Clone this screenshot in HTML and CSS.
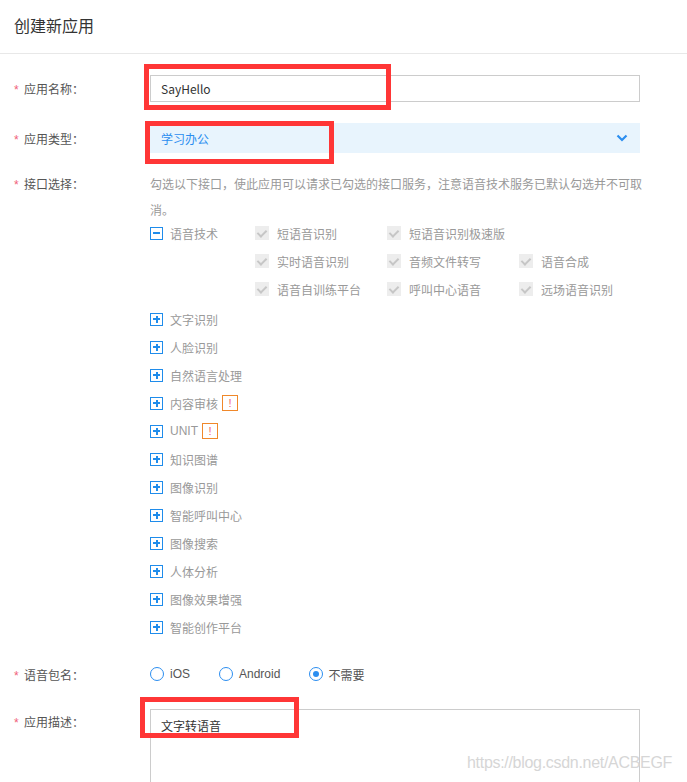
FILE: index.html
```html
<!DOCTYPE html>
<html lang="zh-CN">
<head>
<meta charset="utf-8">
<title>创建新应用</title>
<link rel="stylesheet" href="styles.css">
</head>
<body>
<div class="page">
  <header class="hd">创建新应用</header>
  <div class="form">
    <div class="row row-name">
      <div class="lbl"><span class="req">*</span>应用名称：</div>
      <div class="ctl"><div class="input">SayHello</div></div>
    </div>
    <div class="row row-type">
      <div class="lbl"><span class="req">*</span>应用类型：</div>
      <div class="ctl">
        <div class="select">
          <span>学习办公</span>
          <svg class="chev" width="12" height="8" viewBox="0 0 12 8"><path d="M1.5 1.5 L6 6 L10.5 1.5" fill="none" stroke="#2b8ef0" stroke-width="2.2"/></svg>
        </div>
      </div>
    </div>
    <div class="row row-api">
      <div class="lbl lbl-top"><span class="req">*</span>接口选择：</div>
      <div class="ctl">
        <div class="desc">勾选以下接口，使此应用可以请求已勾选的接口服务，注意语音技术服务已默认勾选并不可取消。</div>
        <div class="tree">
          <div class="group">
            <div class="node"><span class="tg minus"></span><span>语音技术</span></div>
            <div class="checks">
              <div class="ck"><span class="box"></span>短语音识别</div>
              <div class="ck"><span class="box"></span>短语音识别极速版</div>
              <div class="ck empty"></div>
              <div class="ck"><span class="box"></span>实时语音识别</div>
              <div class="ck"><span class="box"></span>音频文件转写</div>
              <div class="ck"><span class="box"></span>语音合成</div>
              <div class="ck"><span class="box"></span>语音自训练平台</div>
              <div class="ck"><span class="box"></span>呼叫中心语音</div>
              <div class="ck"><span class="box"></span>远场语音识别</div>
            </div>
          </div>
          <div class="list">
            <div class="node"><span class="tg plus"></span><span>文字识别</span></div>
            <div class="node"><span class="tg plus"></span><span>人脸识别</span></div>
            <div class="node"><span class="tg plus"></span><span>自然语言处理</span></div>
            <div class="node"><span class="tg plus"></span><span>内容审核</span><span class="badge">!</span></div>
            <div class="node"><span class="tg plus"></span><span class="latin">UNIT</span><span class="badge">!</span></div>
            <div class="node"><span class="tg plus"></span><span>知识图谱</span></div>
            <div class="node"><span class="tg plus"></span><span>图像识别</span></div>
            <div class="node"><span class="tg plus"></span><span>智能呼叫中心</span></div>
            <div class="node"><span class="tg plus"></span><span>图像搜索</span></div>
            <div class="node"><span class="tg plus"></span><span>人体分析</span></div>
            <div class="node"><span class="tg plus"></span><span>图像效果增强</span></div>
            <div class="node"><span class="tg plus"></span><span>智能创作平台</span></div>
          </div>
        </div>
      </div>
    </div>
    <div class="row row-pkg">
      <div class="lbl"><span class="req">*</span>语音包名：</div>
      <div class="ctl radios">
        <label class="radio"><span class="rc"></span><span class="latin">iOS</span></label>
        <label class="radio"><span class="rc"></span><span class="latin">Android</span></label>
        <label class="radio"><span class="rc on"></span><span>不需要</span></label>
      </div>
    </div>
    <div class="row row-desc">
      <div class="lbl lbl-top"><span class="req">*</span>应用描述：</div>
      <div class="ctl"><div class="textarea">文字转语音</div></div>
    </div>
  </div>
  <div class="mark mark-name"></div>
  <div class="mark mark-type"></div>
  <div class="mark mark-desc"></div>
  <div class="wm">https://blog.csdn.net/ACBEGF</div>
</div>
</body>
</html>
```

FILE: styles.css
```css
html, body {
  margin: 0;
  padding: 0;
  background: #fff;
}
body {
  font-family: "Noto Sans CJK SC", "Noto Sans", sans-serif;
  font-size: 12px;
  color: #555;
  overflow: hidden;
}
.page {
  position: relative;
  width: 687px;
  height: 782px;
  overflow: hidden;
}
.hd {
  height: 53px;
  line-height: 50px;
  padding-left: 14px;
  font-size: 16px;
  color: #333;
  border-bottom: 1px solid #e8e8e8;
}
.form {
  padding-top: 21px;
}
.row {
  display: flex;
  align-items: center;
}
.row-api, .row-desc {
  align-items: flex-start;
}
.row-type { margin-top: 21px; }
.row-api { margin-top: 18px; }
.row-pkg { margin-top: 19px; height: 28px; }
.row-desc { margin-top: 21px; }
.lbl {
  width: 136px;
  padding-left: 14px;
  flex: none;
  color: #555;
  white-space: nowrap;
}
.lbl-top { line-height: 26px; }
.req {
  color: #f0607a;
  display: inline-block;
  width: 10px;
  font-family: "Liberation Sans", sans-serif;
}
.ctl {
  width: 490px;
  flex: none;
}
.input {
  height: 25px;
  line-height: 25px;
  border: 1px solid #ccc;
  padding-left: 10px;
  color: #333;
  font-size: 12px;
}
.select {
  height: 30px;
  background: #e8f4fd;
  display: flex;
  align-items: center;
  justify-content: space-between;
  padding: 0 11px;
  color: #2b8ef0;
}
.chev { margin-right: 1px; }
.desc {
  width: 496px;
  font-size: 12px;
  line-height: 26px;
  color: #999;
}
.tree {
  margin-top: -4px;
  color: #999;
}
.group {
  display: flex;
}
.node {
  height: 28px;
  display: flex;
  align-items: center;
  flex: none;
}
.group > .node {
  width: 105px;
  align-self: flex-start;
}
.tg {
  width: 11px;
  height: 11px;
  border: 1px solid #1f8ceb;
  margin-right: 7px;
  position: relative;
  flex: none;
}
.tg::before {
  content: "";
  position: absolute;
  left: 2px;
  top: 4.5px;
  width: 7px;
  height: 2px;
  background: #1f8ceb;
}
.plus::after {
  content: "";
  position: absolute;
  left: 4.5px;
  top: 2px;
  width: 2px;
  height: 7px;
  background: #1f8ceb;
}
.checks {
  display: grid;
  grid-template-columns: 132px 132px 110px;
  grid-auto-rows: 28px;
}
.ck {
  display: flex;
  align-items: center;
  color: #999;
  white-space: nowrap;
}
.box {
  width: 14px;
  height: 14px;
  background: #ededed;
  margin-right: 8px;
  position: relative;
  flex: none;
}
.box::after {
  content: "";
  position: absolute;
  left: 4px;
  top: 2px;
  width: 4px;
  height: 7px;
  border-right: 2px solid #c6c6c6;
  border-bottom: 2px solid #c6c6c6;
  transform: rotate(45deg);
}
.list {
  margin-top: 2px;
}
.latin {
  font-family: "Liberation Sans", "Noto Sans CJK SC", sans-serif;
}
.badge {
  margin-left: 4px;
  width: 14px;
  height: 14px;
  border: 1px solid #f0882a;
  color: #f25c6a;
  font-family: "Liberation Sans", sans-serif;
  font-size: 11px;
  line-height: 14px;
  text-align: center;
}
.radios {
  display: flex;
  align-items: center;
}
.radio {
  display: flex;
  align-items: center;
  margin-right: 29px;
  color: #555;
}
.rc {
  width: 12px;
  height: 12px;
  border: 1px solid #2b8ef0;
  border-radius: 50%;
  margin-right: 6px;
  position: relative;
  flex: none;
}
.rc.on::after {
  content: "";
  position: absolute;
  left: 3px;
  top: 3px;
  width: 6px;
  height: 6px;
  border-radius: 50%;
  background: #2b8ef0;
}
.radio:nth-child(3) .rc { margin-right: 5px; }
.textarea {
  height: 110px;
  border: 1px solid #ccc;
  padding: 7px 10px;
  color: #333;
  font-size: 12px;
  line-height: 18px;
}
.mark {
  position: absolute;
  border: 5px solid #ff3636;
  box-sizing: border-box;
}
.mark-name { left: 144px; top: 64px; width: 247px; height: 46px; }
.mark-type { left: 145px; top: 121px; width: 189px; height: 43px; }
.mark-desc { left: 140px; top: 697px; width: 159px; height: 41px; }
.wm {
  position: absolute;
  left: 467px;
  top: 754px;
  font-family: "Liberation Sans", sans-serif;
  font-size: 16px;
  color: #d6d6d6;
  letter-spacing: -0.3px;
}
```
